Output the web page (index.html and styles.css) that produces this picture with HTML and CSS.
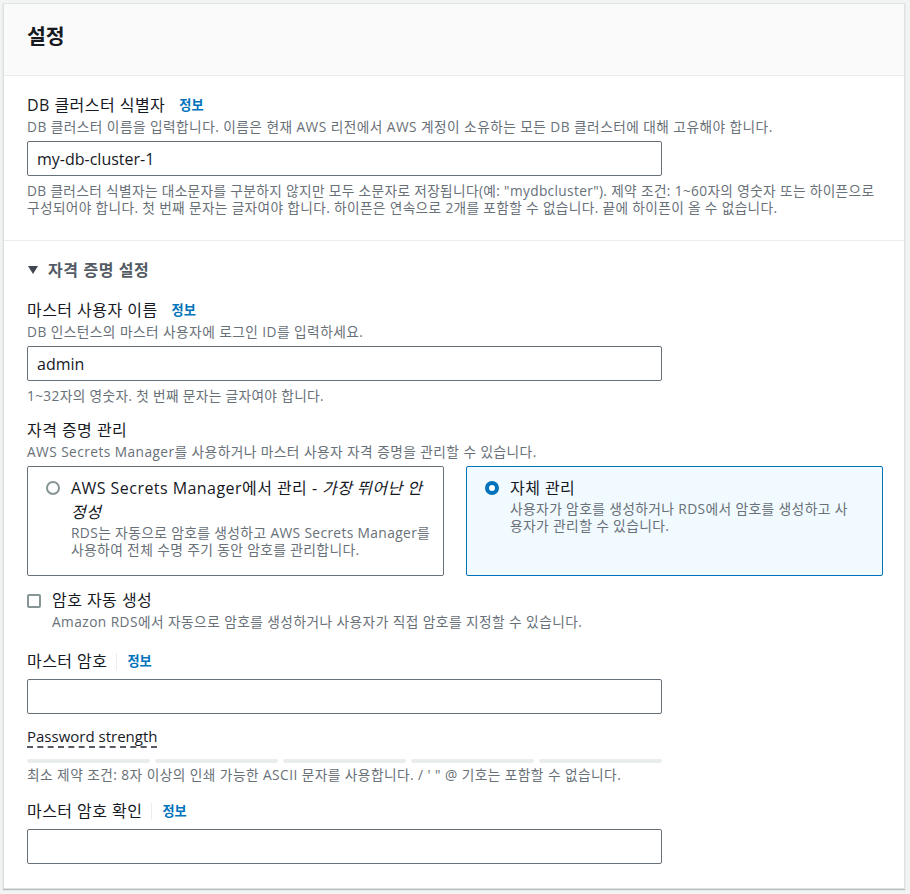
FILE: index.html
```html
<!DOCTYPE html>
<html lang="ko">
<head>
<meta charset="utf-8">
<title>설정</title>
<link rel="stylesheet" href="styles.css">
</head>
<body>
<div class="panel">
  <div class="panel-header"><h2>설정</h2></div>

  <div class="section">
    <div class="label-row"><span class="label">DB 클러스터 식별자</span><a class="info">정보</a></div>
    <div class="desc">DB 클러스터 이름을 입력합니다. 이름은 현재 AWS 리전에서 AWS 계정이 소유하는 모든 DB 클러스터에 대해 고유해야 합니다.</div>
    <div class="input">my-db-cluster-1</div>
    <div class="hint">DB 클러스터 식별자는 대소문자를 구분하지 않지만 모두 소문자로 저장됩니다(예: "mydbcluster"). 제약 조건: 1~60자의 영숫자 또는 하이픈으로 구성되어야 합니다. 첫 번째 문자는 글자여야 합니다. 하이픈은 연속으로 2개를 포함할 수 없습니다. 끝에 하이픈이 올 수 없습니다.</div>
  </div>

  <div class="section">
    <div class="expander">
      <svg class="caret" width="10" height="8" viewBox="0 0 10 8"><path d="M0 0H10L5 8Z" fill="#414750"/></svg>
      <span>자격 증명 설정</span>
    </div>

    <div class="field f-user">
      <div class="label-row"><span class="label">마스터 사용자 이름</span><a class="info">정보</a></div>
      <div class="desc">DB 인스턴스의 마스터 사용자에 로그인 ID를 입력하세요.</div>
      <div class="input">admin</div>
      <div class="hint">1~32자의 영숫자. 첫 번째 문자는 글자여야 합니다.</div>
    </div>

    <div class="field f-cred">
      <div class="label-row"><span class="label">자격 증명 관리</span></div>
      <div class="desc">AWS Secrets Manager를 사용하거나 마스터 사용자 자격 증명을 관리할 수 있습니다.</div>
      <div class="tiles">
        <div class="tile tile-secrets">
          <span class="radio"></span>
          <div class="tile-body">
            <div class="tile-title">AWS Secrets Manager에서 관리 - <em>가장 뛰어난 안정성</em></div>
            <div class="tile-desc">RDS는 자동으로 암호를 생성하고 AWS Secrets Manager를 사용하여 전체 수명 주기 동안 암호를 관리합니다.</div>
          </div>
        </div>
        <div class="tile tile-self selected">
          <span class="radio checked"></span>
          <div class="tile-body">
            <div class="tile-title">자체 관리</div>
            <div class="tile-desc">사용자가 암호를 생성하거나 RDS에서 암호를 생성하고 사용자가 관리할 수 있습니다.</div>
          </div>
        </div>
      </div>
    </div>

    <div class="field f-check">
      <div class="check-row"><span class="checkbox"></span><span class="label">암호 자동 생성</span></div>
      <div class="desc indent">Amazon RDS에서 자동으로 암호를 생성하거나 사용자가 직접 암호를 지정할 수 있습니다.</div>
    </div>

    <div class="field f-pw">
      <div class="label-row"><span class="label">마스터 암호</span><a class="info sep">정보</a></div>
      <div class="input input-pw"></div>
      <div class="strength"><span class="strength-label">Password strength</span></div>
      <div class="bars"><span class="bar"></span><span class="bar"></span><span class="bar"></span><span class="bar"></span><span class="bar"></span></div>
      <div class="hint tight">최소 제약 조건: 8자 이상의 인쇄 가능한 ASCII 문자를 사용합니다. / ' " @ 기호는 포함할 수 없습니다.</div>
    </div>

    <div class="field f-pw2">
      <div class="label-row"><span class="label">마스터 암호 확인</span><a class="info sep">정보</a></div>
      <div class="input input-pw"></div>
    </div>
  </div>
</div>
</body>
</html>
```

FILE: styles.css
```css
* { box-sizing: border-box; }
html, body { margin: 0; }
body {
  background: #f2f3f3;
  padding: 3px 5px 6px 3px;
  font-family: "Open Sans", "Noto Sans CJK KR", sans-serif;
  color: #16191f;
}
.panel {
  background: #fff;
  border: 1px solid #dfe2e3;
  box-shadow: 0 1px 1px 0 rgba(0, 28, 36, 0.25);
}
.panel-header {
  background: #fafafa;
  border-bottom: 1px solid #eaeded;
  padding: 20px 23px 27px;
}
.panel-header h2 {
  margin: 0;
  font-size: 20.5px;
  line-height: 24px;
  font-weight: 700;
}
.section {
  padding: 18px 21px 24px 23px;
  border-bottom: 1px solid #eaeded;
}
.section:last-child { border-bottom: 0; }

.label-row {
  display: flex;
  align-items: center;
  line-height: 22px;
}
.label {
  font-size: 16px;
  line-height: 22px;
  letter-spacing: 0.45px;
}
.info {
  font-size: 13.2px;
  font-weight: 700;
  color: #0073bb;
  margin-left: 14px;
  line-height: 17px;
}
.info.sep {
  margin-left: 9px;
  padding-left: 10px;
  border-left: 1px solid #eaeded;
}
.desc, .hint {
  font-size: 13.7px;
  line-height: 17px;
  letter-spacing: 0.45px;
  color: #687078;
  margin-top: 2px;
}
.hint { margin-top: 6px; letter-spacing: 0.35px; }
.hint.tight { margin-top: 3px; letter-spacing: 0.45px; }
.input {
  margin-top: 6px;
  width: 635px;
  height: 35px;
  border: 1px solid #687078;
  border-radius: 2px;
  padding: 0 9px;
  font-size: 16px;
  display: flex;
  align-items: center;
}
.input-pw { margin-top: 7px; }

.expander {
  display: flex;
  align-items: center;
  line-height: 22px;
  font-size: 16px;
  letter-spacing: 0.6px;
  font-weight: 700;
  color: #545b64;
}
.caret { margin: 0 10px 0 1px; }

.f-user { margin-top: 18px; }
.f-cred { margin-top: 15px; }
.f-check { margin-top: 13px; }
.f-pw { margin-top: 20px; }
.f-pw2 { margin-top: 17px; }

.tiles {
  margin-top: 6px;
  display: grid;
  grid-template-columns: 1fr 1fr;
  gap: 22px;
}
.tile {
  display: flex;
  align-items: flex-start;
  border: 1px solid #687078;
  border-radius: 2px;
  padding: 9px 20px 17px 18px;
  min-height: 110px;
}
.tile-secrets { padding-right: 8px; }
.tile-self { padding-right: 28px; }
.tile.selected {
  border-color: #0073bb;
  background: #f1faff;
}
.radio {
  flex-shrink: 0;
  width: 14px;
  height: 14px;
  margin: 5px 11px 0 0;
  border: 2px solid #879596;
  border-radius: 50%;
  background: #fff;
}
.radio.checked { border: 4px solid #0073bb; }
.tile-title {
  font-size: 16px;
  line-height: 24px;
  letter-spacing: 0.45px;
}
.tile-title em { font-style: italic; }
.tile-desc {
  font-size: 13.8px;
  line-height: 17px;
  letter-spacing: 0.35px;
  color: #687078;
}

.check-row {
  display: flex;
  align-items: center;
  line-height: 22px;
}
.checkbox {
  width: 14px;
  height: 14px;
  border: 2px solid #879596;
  border-radius: 2px;
  margin-right: 11px;
  margin-top: 2px;
}
.indent { padding-left: 25px; }

.strength { margin-top: 13px; line-height: 19px; }
.strength-label {
  display: inline-block;
  font-size: 15px;
  line-height: 19px;
  border-bottom: 2px dashed #545b64;
}
.bars {
  margin-top: 11px;
  width: 635px;
  display: flex;
  gap: 5px;
}
.bar {
  flex: 1;
  height: 4px;
  border-radius: 2px;
  background: #eaeded;
}
```
